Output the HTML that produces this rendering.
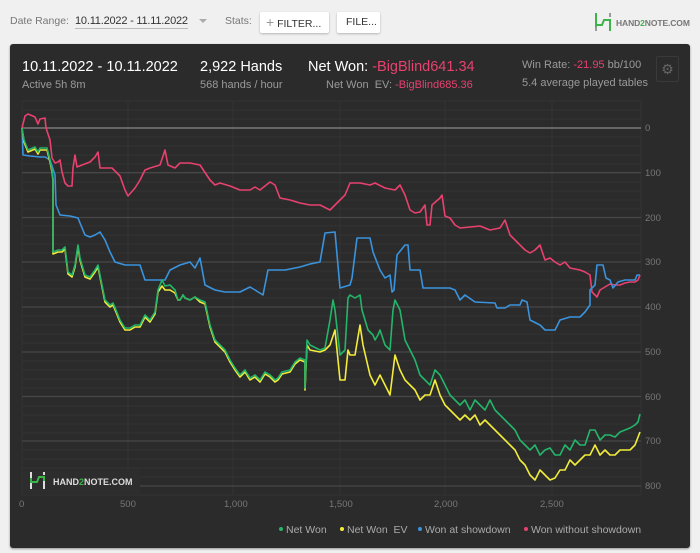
<!DOCTYPE html>
<html><head><meta charset="utf-8"><style>
*{margin:0;padding:0;box-sizing:border-box}
body{width:700px;height:553px;background:#f0f0f0;font-family:"Liberation Sans",sans-serif;position:relative;overflow:hidden}
.a{position:absolute;white-space:nowrap}
.btn{position:absolute;background:#fff;border-radius:2px;box-shadow:0 1px 2px rgba(0,0,0,.25);font-size:10.5px;color:#333;top:12px;height:21px;line-height:21px}
#panel{position:absolute;left:10px;top:44px;width:680px;height:504px;background:#2b2b2b;border-radius:3px;box-shadow:0 1px 2px rgba(0,0,0,.4)}
.w{color:#fff}.g{color:#9a9a9a}.p{color:#e8416f}
</style></head><body>
<div class="a g" style="left:10px;top:15px;font-size:10.5px;color:#777">Date Range:</div>
<div class="a" style="left:75px;top:15px;font-size:11px;color:#333;border-bottom:1px solid #bbb;padding-bottom:1px;letter-spacing:-.2px">10.11.2022 - 11.11.2022</div>
<div class="a" style="left:199px;top:19px;width:0;height:0;border-left:4px solid transparent;border-right:4px solid transparent;border-top:4px solid #aaa"></div>
<div class="a" style="left:225px;top:15px;font-size:10.5px;color:#777">Stats:</div>
<div class="btn" style="left:260px;width:69px;padding-left:6px"><span style="color:#999;font-size:14px">+</span> FILTER...</div>
<div class="btn" style="left:337px;width:43px;padding-left:9px">FILE...</div>
<svg class="a" style="left:593px;top:13px" width="20" height="20"><path d="M3 0v18M3 12H9L11 7H17V18" stroke="#3cb44a" stroke-width="2" fill="none"/><path d="M17 0v4M3 14v4" stroke="#9a9a9a" stroke-width="2"/></svg>
<div class="a" style="left:616px;top:18px;font-size:8.5px;font-weight:bold;color:#777;letter-spacing:-.1px">HAND<span style="color:#3cb44a">2</span>NOTE.COM</div>
<div id="panel">
<div class="a w" style="left:12px;top:15px;font-size:14.5px">10.11.2022 - 10.11.2022</div>
<div class="a g" style="left:12px;top:35px;font-size:11px">Active 5h 8m</div>
<div class="a w" style="left:190px;top:15px;font-size:14.5px">2,922 Hands</div>
<div class="a g" style="left:190px;top:35px;font-size:11px">568 hands / hour</div>
<div class="a w" style="left:298px;top:15px;font-size:14.5px">Net Won: <span class="p">-BigBlind641.34</span></div>
<div class="a g" style="left:316px;top:35px;font-size:11px">Net Won&nbsp; EV: <span class="p">-BigBlind685.36</span></div>
<div class="a g" style="left:512px;top:15px;font-size:11px">Win Rate: <span class="p">-21.95</span> bb/100</div>
<div class="a g" style="left:512px;top:33px;font-size:11px">5.4 average played tables</div>
<div class="a" style="left:646px;top:12px;width:23px;height:26px;border:1px solid #3a3a3a;border-radius:2px;color:#666;font-size:14px;text-align:center;line-height:24px">⚙</div>
</div>
<svg class="a" style="left:0;top:0" width="700" height="553">
<g stroke="#333" stroke-width="1">
<path d="M22 101H641M22 110H641M22 119H641M22 137H641M22 146H641M22 155H641M22 164H641M22 182H641M22 191H641M22 200H641M22 209H641M22 226H641M22 235H641M22 244H641M22 253H641M22 271H641M22 280H641M22 289H641M22 298H641M22 316H641M22 325H641M22 334H641M22 343H641M22 361H641M22 370H641M22 379H641M22 388H641M22 406H641M22 415H641M22 424H641M22 433H641M22 450H641M22 459H641M22 468H641M22 477H641M22 495H641"/>
<path d="M22 101V495M128 101V495M233 101V495M340 101V495M445 101V495M552 101V495M641 101V495"/>
</g>
<g stroke="#474747" stroke-width="1.3"><path d="M22 172.7H641M22 217.5H641M22 262H641M22 307H641M22 352H641M22 396.5H641M22 441H641M22 486H641"/></g>
<path d="M22 128H641" stroke="#888" stroke-width="1.3"/>
<g font-size="9.5" fill="#777"><text x="645" y="131">0</text><text x="645" y="176">100</text><text x="645" y="221">200</text><text x="645" y="265">300</text><text x="645" y="310">400</text><text x="645" y="355">500</text><text x="645" y="400">600</text><text x="645" y="444">700</text><text x="645" y="489">800</text>
<text x="19" y="507">0</text><text x="120" y="507">500</text><text x="224" y="507">1,000</text><text x="329" y="507">1,500</text><text x="434" y="507">2,000</text><text x="540" y="507">2,500</text></g>
<g fill="none" stroke-width="1.6" stroke-linejoin="round">
<polyline stroke="#e8416f" points="22,128 25,116 28,114 35,117 38,124 40,119 45,118 46,128 50,140 52,158 55,163 58,162 60,160 62,172 65,183 68,186 72,186 73,168 75,155 77,167 82,165 90,162 95,157 98,152 100,168 112,168 120,176 125,190 128,196 135,188 140,180 145,170 150,168 160,165 165,150 168,165 175,168 180,163 190,163 200,165 210,180 215,185 220,183 230,186 235,188 240,190 250,190 255,187 260,190 265,186 270,182 275,185 280,198 290,200 300,203 310,205 320,205 330,210 335,205 340,200 345,195 350,183 360,183 370,185 375,183 385,188 395,190 400,185 405,195 410,210 415,213 420,212 425,205 427,225 430,225 432,205 440,198 442,195 445,216 450,218 455,225 460,228 470,227 480,226 490,230 500,228 505,220 510,235 520,245 525,250 530,253 535,250 540,245 545,260 550,258 555,262 560,265 565,262 570,268 580,270 585,272 590,275 592,292 597,297 600,290 605,287 610,284 615,285 620,285 625,283 630,282 635,282 638,280 640,275"/>
<polyline stroke="#3a93dd" points="22,128 23,155 30,156 40,157 45,157 50,160 55,175 56,205 60,215 70,216 78,218 80,223 85,235 90,237 95,235 100,232 105,240 110,252 115,262 125,265 140,265 145,280 165,280 170,270 180,265 190,262 195,268 200,258 205,285 215,290 225,292 240,292 250,287 255,290 263,295 268,270 285,270 300,267 310,264 320,262 325,233 335,232 340,288 350,285 352,278 357,238 370,238 373,252 380,270 385,278 390,275 392,292 394,290 397,255 405,245 408,245 410,270 420,270 423,288 450,288 455,290 460,300 465,295 475,302 495,303 497,308 505,308 510,305 520,305 522,300 527,302 530,320 540,325 545,330 555,330 560,320 570,317 580,317 585,312 590,305 590,290 595,285 597,265 603,265 606,278 610,280 613,288 618,282 625,280 635,280 637,275 640,275"/>
<polyline stroke="#f2ec3a" points="22,128 24,142 28,152 35,149 38,154 40,150 47,150 50,162 52,172 53,180 53,254 58,252 62,252 65,249 68,274 72,277 75,267 78,247 80,260 82,267 85,277 90,279 95,272 98,267 100,277 105,302 110,307 113,305 116,312 120,322 125,330 130,330 135,327 140,327 145,317 150,322 155,314 158,292 162,286 165,290 170,290 175,293 178,300 180,300 183,295 185,298 190,300 195,297 200,302 205,304 210,327 215,342 220,347 225,352 230,362 235,370 240,377 245,372 250,380 255,377 260,382 265,374 270,377 275,382 278,380 282,374 290,372 295,364 300,360 305,362 305,390 307,345 310,350 320,352 325,350 330,345 335,330 340,380 345,380 348,350 350,355 355,355 360,325 363,345 370,375 375,385 380,375 385,385 390,395 395,355 400,370 405,380 410,385 415,390 420,400 425,395 430,395 435,380 440,395 445,405 450,410 455,415 460,420 465,415 470,420 475,415 480,425 485,420 490,425 495,430 500,435 505,440 510,445 515,450 520,460 525,465 530,475 535,480 540,470 545,475 550,480 555,478 560,470 565,470 570,460 575,465 580,460 585,455 590,455 595,445 600,455 605,450 610,455 615,455 620,450 630,450 635,445 640,432"/>
<polyline stroke="#23b56a" points="22,128 24,140 28,150 35,147 38,152 40,148 47,148 50,160 52,170 53,178 53,252 58,250 62,250 65,247 68,272 72,275 75,265 78,245 80,258 82,265 85,275 90,277 95,270 98,265 100,275 105,300 110,305 113,303 116,310 120,320 125,328 130,328 135,325 140,325 145,315 150,320 155,312 158,290 162,280 165,286 170,285 175,290 178,300 180,300 183,295 185,298 190,300 195,297 200,300 205,302 210,325 215,340 220,345 225,350 230,360 235,368 240,375 245,370 250,378 255,375 260,380 265,372 270,375 275,380 278,378 282,372 290,370 295,362 300,358 305,360 305,388 307,340 310,345 320,350 325,348 330,320 333,300 335,310 340,355 345,350 348,298 350,295 355,298 360,295 362,310 365,320 368,330 373,335 375,340 378,335 380,330 385,345 390,350 393,310 395,300 400,310 405,340 410,350 415,360 420,375 425,380 430,385 435,370 440,375 445,385 450,395 455,400 460,405 465,400 470,410 475,400 480,405 485,410 490,400 495,410 500,415 505,420 510,425 515,430 520,440 525,445 530,450 535,445 540,455 545,450 550,448 555,455 560,455 565,445 570,450 575,440 580,445 585,445 590,430 595,430 600,440 605,435 610,435 615,437 620,432 625,430 630,428 635,425 638,422 640,414"/>
</g>
<rect x="22" y="470" width="118" height="25" fill="#2d2d2d"/>
<path d="M31 472v6M31 482v7M44 472v3M44 481v8" stroke="#ddd" stroke-width="2"/>
<path d="M31 478v4H37L39 477H44v4" stroke="#3cb44a" stroke-width="2" fill="none"/>
<text x="53" y="485" font-size="9" font-weight="bold" fill="#ddd">HAND<tspan fill="#3cb44a">2</tspan>NOTE.COM</text>
<g font-size="10.5" fill="#aaa"><circle cx="281" cy="529" r="2" fill="#23b56a"/><text x="286" y="533">Net Won</text>
<circle cx="342" cy="529" r="2" fill="#f2ec3a"/><text x="347" y="533">Net Won&#160; EV</text>
<circle cx="420" cy="529" r="2" fill="#3a93dd"/><text x="425" y="533">Won at showdown</text>
<circle cx="526" cy="529" r="2" fill="#e8416f"/><text x="531" y="533">Won without showdown</text></g>
</svg>
</body></html>
